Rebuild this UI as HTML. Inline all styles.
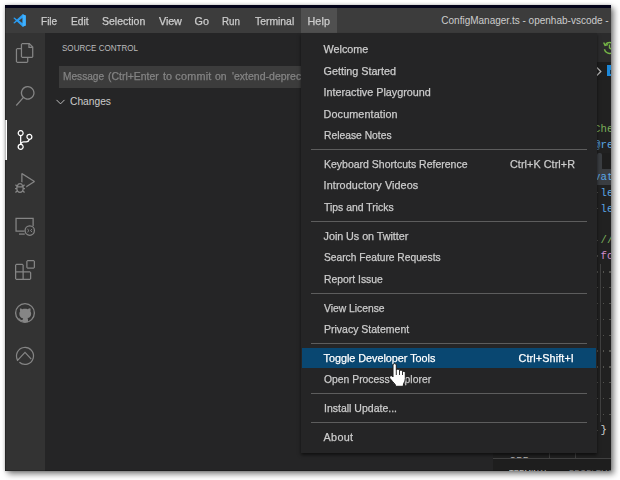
<!DOCTYPE html>
<html><head><meta charset="utf-8">
<style>
html,body{margin:0;padding:0;background:#fff;}
body{width:620px;height:480px;overflow:hidden;position:relative;font-family:"Liberation Sans",sans-serif;}
#win{position:absolute;left:5px;top:5px;width:606px;height:466px;background:#1e1e1e;box-shadow:2.5px 3px 6px rgba(0,0,0,.5),0 0 3px rgba(0,0,0,.22);}
#clip{position:absolute;left:0;top:0;width:606px;height:466px;overflow:hidden;}
.abs{position:absolute;}
.t{position:absolute;white-space:pre;line-height:14px;height:14px;}
#topstrip{left:0;top:0;width:606px;height:3px;background:#04041a;}
#titlebar{left:0;top:3px;width:606px;height:25px;background:#3c3c3c;}
#activity{left:0;top:28px;width:40px;height:438px;background:#333333;}
#sidebar{left:40px;top:28px;width:448px;height:438px;background:#252526;}
#editor{left:488px;top:28px;width:118px;height:438px;background:#1e1e1e;}
#menu{left:296px;top:28px;width:296px;height:420px;background:#252526;box-shadow:0 1.6px 3.3px rgba(0,0,0,.6);}
.sep{position:absolute;left:306px;width:276px;height:1px;background:#5d5d5d;}
svg{position:absolute;overflow:visible;}
.gray .t{-webkit-text-stroke:0.25px currentColor}
.gray{position:absolute;left:0;top:0;width:0;height:0;will-change:transform}
.dot{position:absolute;width:1.4px;height:1.4px;background:#52524e;}
</style></head><body>
<div id="win"><div id="clip">
  <div class="abs" id="topstrip"></div>
  <div class="abs" id="titlebar"></div>
  <svg style="left:8px;top:9px" width="13" height="13" viewBox="0 0 100 100"><path d="M74 2 L30 42 L11 27 L2 31 L22 50 L2 69 L11 73 L30 58 L74 98 L98 88 L98 12 Z M74 29 L74 71 L46 50 Z" fill="#2a9df4" fill-rule="evenodd"/><path d="M74 2 L98 12 L98 88 L74 98 Z" fill="#3fb1ff"/></svg>
  <div class="abs" style="left:296px;top:3px;width:36px;height:25px;background:#505050"></div>
<div class="gray">
<span class="t" style="left:36.00px;top:8.86px;font-size:10.8px;color:#cccccc;transform:scaleX(0.9307);transform-origin:0 0">File</span>
<span class="t" style="left:65.80px;top:8.86px;font-size:10.8px;color:#cccccc;transform:scaleX(0.9458);transform-origin:0 0">Edit</span>
<span class="t" style="left:97.00px;top:8.86px;font-size:10.8px;color:#cccccc;transform:scaleX(0.9747);transform-origin:0 0">Selection</span>
<span class="t" style="left:154.00px;top:8.86px;font-size:10.8px;color:#cccccc;letter-spacing:-0.130px">View</span>
<span class="t" style="left:189.60px;top:8.86px;font-size:10.8px;color:#cccccc;letter-spacing:-0.103px">Go</span>
<span class="t" style="left:217.30px;top:8.86px;font-size:10.8px;color:#cccccc;transform:scaleX(0.9085);transform-origin:0 0">Run</span>
<span class="t" style="left:249.50px;top:8.86px;font-size:10.8px;color:#cccccc;transform:scaleX(0.9605);transform-origin:0 0">Terminal</span>
<span class="t" style="left:302.50px;top:8.86px;font-size:10.8px;color:#cccccc;letter-spacing:0.070px">Help</span>
</div>
<span class="t" style="left:436.30px;top:8.73px;font-size:10px;color:#cccccc;letter-spacing:0.002px">ConfigManager.ts - openhab-vscode -</span>
  <div class="abs" id="activity"></div>
  <div class="abs" style="left:0;top:114.7px;width:1.6px;height:40px;background:#fff"></div>
  <svg class="ic" style="left:10px;top:38px" width="20" height="20" viewBox="0 0 24 24" fill="#858585"><path d="M17.5 0h-9L7 1.5V6H2.5L1 7.500v15.070L2.500 24h12.070L16 22.570V18h4.700l1.300-1.430V4.500L17.500 0zm0 2.120l2.380 2.380H17.500V2.120zm-3 20.380h-12v-15H7v9.070L8.500 18h6v4.500zm6-6h-12v-15H16V6h4.500v10.500z"/></svg>
  <svg class="ic" style="left:10px;top:81.3px" width="20" height="20" viewBox="0 0 24 24" fill="#858585"><path d="M15.250 0a8.250 8.250 0 0 0-6.180 13.720L1 22.880l1.120 1 8.050-9.120A8.251 8.251 0 1 0 15.250.010V0zm0 15a6.750 6.750 0 1 1 0-13.500 6.750 6.750 0 0 1 0 13.500z"/></svg>
  <svg class="ic" style="left:10px;top:124.7px" width="20" height="20" viewBox="0 0 24 24" fill="#ffffff"><path d="M21.007 8.222A3.738 3.738 0 0 0 15.045 5.200a3.737 3.737 0 0 0 1.156 6.583 2.988 2.988 0 0 1-2.668 1.670h-2.990a4.456 4.456 0 0 0-2.989 1.165V7.400a3.737 3.737 0 1 0-1.494 0v9.117a3.776 3.776 0 1 0 1.816.099 2.990 2.990 0 0 1 2.668-1.667h2.990a4.484 4.484 0 0 0 4.223-3.039 3.736 3.736 0 0 0 3.250-3.687zM4.565 3.738a2.242 2.242 0 1 1 4.484 0 2.242 2.242 0 0 1-4.484 0zm4.484 16.441a2.242 2.242 0 1 1-4.484 0 2.242 2.242 0 0 1 4.484 0zm8.221-9.715a2.242 2.242 0 1 1 0-4.485 2.242 2.242 0 0 1 0 4.485z"/></svg>
  <svg class="ic" style="left:10px;top:168px" width="20" height="20" viewBox="0 0 24 24" fill="#858585"><path d="M10.940 13.500l-1.320 1.320a3.730 3.730 0 0 0-7.240 0L1.060 13.500 0 14.560l1.720 1.720-.220.220V18H0v1.500h1.500v.080c.077.489.214.966.410 1.420L0 22.940 1.060 24l1.650-1.650A4.308 4.308 0 0 0 6 24a4.310 4.310 0 0 0 3.290-1.650L10.940 24 12 22.940 10.090 21c.198-.464.336-.951.410-1.450v-.100H12V18h-1.500v-1.500l-.220-.220L12 14.560l-1.060-1.060zM6 13.500a2.250 2.250 0 0 1 2.250 2.250h-4.500A2.250 2.250 0 0 1 6 13.500zm3 6a3.330 3.330 0 0 1-3 3 3.330 3.330 0 0 1-3-3v-2.250h6v2.250zm14.760-9.900v1.260L13.500 17.370V15.600l8.500-5.370L9 2v9.460a5.070 5.070 0 0 0-1.500-.720V.630L8.640 0l15.120 9.600z"/></svg>
  <svg class="ic" style="left:10px;top:211.3px" width="20" height="20" viewBox="0 0 24 24" fill="none" stroke="#858585" stroke-width="1.5"><path d="M11.500 18.250H1.250V2.750h20.500v9.200"/><path d="M4.800 21.700h6.900"/><circle cx="17.700" cy="17.500" r="5.600"/><path d="M14.900 15.700l1.900 1.800-1.900 1.800M20.500 15.700l-1.900 1.800 1.900 1.800" stroke-width="1.200"/></svg>
  <svg class="ic" style="left:10px;top:254.7px" width="20" height="20" viewBox="0 0 24 24" fill="#858585"><path d="M13.500 1.500L15 0h7.500L24 1.500V9l-1.500 1.500H15L13.500 9V1.500zm1.500 0V9h7.500V1.500H15zM0 15V6l1.500-1.500H9L10.500 6v7.500H18l1.500 1.500v7.500L18 24H1.500L0 22.500V15zm9-1.500V6H1.500v7.500H9zM9 15H1.500v7.500H9V15zm1.500 7.500H18V15h-7.500v7.500z"/></svg>
  <svg class="ic" style="left:10px;top:298px" width="20" height="20" viewBox="0 0 24 24" fill="none" stroke="#858585" stroke-width="1.600"><circle cx="12" cy="12" r="11.250"/><path fill="#858585" stroke="none" d="M5.600 6.200c1.200 0 2.300.5 3.200 1.200 1-.3 2.100-.4 3.200-.4s2.200.1 3.200.4c.9-.7 2-1.200 3.200-1.200.5 1.300.5 2.600.1 3.600.6.900.9 1.900.9 3 0 3.300-1.900 4.800-4.300 5.300.3.500.5 1.200.5 2.100v3h-6.600v-1.500c-2.600.6-3.600-.9-4.200-2.300-.3-.6-.8-1.100-1.300-1.400 1.100-.3 1.900.4 2.500 1.300.7 1.100 1.700 1.400 3.100 1 .1-.8.300-1.500.7-2-2.500-.4-4.600-1.800-4.600-5.500 0-1.100.3-2.100.9-3-.4-1-.4-2.300.1-3.600z"/></svg>
  <svg class="ic" style="left:9.800px;top:340.800px" width="20" height="20" viewBox="0 0 24 24" fill="none" stroke="#858585" stroke-width="1.500"><path d="M3.350 17.300A10.200 10.200 0 1 1 5.310 19.600"/><path d="M2.500 17.800L12 7.700l7.500 8"/></svg>
  <div class="abs" id="sidebar"></div>
  <div class="abs" style="left:54px;top:61px;width:420px;height:22px;background:#3c3c3c"></div>
  <svg style="left:51.3px;top:93.5px" width="9" height="6" viewBox="0 0 9 6" fill="none" stroke="#bdbdbd" stroke-width="1"><path d="M0.5 0.900L4.5 4.900L8.500 0.900"/></svg>
<span class="t" style="left:56.80px;top:35.81px;font-size:9.2px;color:#bbbbbb;transform:scaleX(0.8769);transform-origin:0 0">SOURCE CONTROL</span>
<span class="t" style="left:65.00px;top:89.46px;font-size:10.8px;color:#cccccc;transform:scaleX(0.9483);transform-origin:0 0">Changes</span>
<div class="gray">
<span class="t" style="left:57.70px;top:64.36px;font-size:10.8px;color:#848484;transform:scaleX(0.9381);transform-origin:0 0">Message</span>
<span class="t" style="left:102.70px;top:64.36px;font-size:10.8px;color:#848484;transform:scaleX(0.9676);transform-origin:0 0">(Ctrl+Enter</span>
<span class="t" style="left:157.90px;top:64.36px;font-size:10.8px;color:#848484;letter-spacing:0.042px">to</span>
<span class="t" style="left:170.30px;top:64.36px;font-size:10.8px;color:#848484;letter-spacing:0.251px">commit</span>
<span class="t" style="left:210.30px;top:64.36px;font-size:10.8px;color:#848484;transform:scaleX(0.9654);transform-origin:0 0">on</span>
<span class="t" style="left:226.80px;top:64.36px;font-size:10.8px;color:#848484;transform:scaleX(0.9734);transform-origin:0 0">'extend-deprecated-settings'</span>
</div>
  <div class="abs" id="editor"></div>
  <div class="abs" style="left:488px;top:28px;width:118px;height:29px;background:#2b2b2c"></div>
  <div class="abs" style="left:488px;top:75px;width:118px;height:378px;background:#212121"></div>
  <svg style="left:597.6px;top:36.2px" width="13" height="13" viewBox="0 0 12 12" fill="none" stroke="#74b446" stroke-width="1.3"><path d="M2.2 3.4A5 5 0 1 1 1.300 7.600"/><path d="M0.600 1.400L1.900 4L4.600 3.400" /><path d="M6 3.300V6.300L8 7.600"/></svg>
  <svg style="left:591.2px;top:61.9px" width="6" height="9" viewBox="0 0 6 9" fill="none" stroke="#b4b4b4" stroke-width="1.300"><path d="M0.800 0.500L4.800 4.500L0.800 8.500"/></svg>
  <div class="abs" style="left:602px;top:60px;width:6px;height:11px;background:#1b87d8"></div>
  <div class="abs" style="left:604.5px;top:64.500px;width:3px;height:4px;background:#14374f"></div>
  <div class="abs" style="left:592px;top:148px;width:4.500px;height:16px;background:#3a3d41;border-radius:2px 2px 0 0"></div>
  <div class="abs" style="left:592px;top:163.800px;width:16px;height:16px;background:#3a3d41;"></div>
  <div class="abs" style="left:596.5px;top:148px;width:12px;height:15.800px;background:#1e1e1e;border-radius:0 0 0 2.500px"></div>
  <div class="abs" style="left:595.3px;top:259px;width:1px;height:158px;background:#404040"></div>
<span class="t" style="left:589.10px;top:117.36px;font-size:10.67px;color:#7aae5a;font-family:'Liberation Mono',monospace">Che</span>
<span class="t" style="left:589.10px;top:133.19px;font-size:10.67px;color:#5aa5e4;font-family:'Liberation Mono',monospace">@re</span>
<span class="t" style="left:589.10px;top:164.86px;font-size:10.67px;color:#5aa5e4;font-family:'Liberation Mono',monospace">vat</span>
<span class="t" style="left:595.50px;top:180.69px;font-size:10.67px;color:#5aa5e4;font-family:'Liberation Mono',monospace">le</span>
<span class="t" style="left:595.50px;top:196.52px;font-size:10.67px;color:#5aa5e4;font-family:'Liberation Mono',monospace">le</span>
<span class="t" style="left:595.50px;top:228.19px;font-size:10.67px;color:#7aae5a;font-family:'Liberation Mono',monospace">//</span>
<span class="t" style="left:595.50px;top:244.02px;font-size:10.67px;color:#d08ccb;font-family:'Liberation Mono',monospace">fo</span>
<span class="t" style="left:595.50px;top:418.18px;font-size:10.67px;color:#d4d4d4;font-family:'Liberation Mono',monospace">}</span>
<div class="dot" style="left:591.4px;top:187.0px"></div>
<div class="dot" style="left:591.4px;top:202.9px"></div>
<div class="dot" style="left:591.4px;top:234.5px"></div>
<div class="dot" style="left:591.4px;top:250.4px"></div>
<div class="dot" style="left:591.4px;top:424.5px"></div>
<div class="dot" style="left:591.4px;top:266.2px"></div>
<div class="dot" style="left:597.8px;top:266.2px"></div>
<div class="dot" style="left:604.2px;top:266.2px"></div>
<div class="dot" style="left:591.4px;top:282.0px"></div>
<div class="dot" style="left:597.8px;top:282.0px"></div>
<div class="dot" style="left:604.2px;top:282.0px"></div>
<div class="dot" style="left:591.4px;top:297.9px"></div>
<div class="dot" style="left:597.8px;top:297.9px"></div>
<div class="dot" style="left:604.2px;top:297.9px"></div>
<div class="dot" style="left:591.4px;top:313.7px"></div>
<div class="dot" style="left:597.8px;top:313.7px"></div>
<div class="dot" style="left:604.2px;top:313.7px"></div>
<div class="dot" style="left:591.4px;top:329.5px"></div>
<div class="dot" style="left:597.8px;top:329.5px"></div>
<div class="dot" style="left:604.2px;top:329.5px"></div>
<div class="dot" style="left:591.4px;top:345.4px"></div>
<div class="dot" style="left:597.8px;top:345.4px"></div>
<div class="dot" style="left:604.2px;top:345.4px"></div>
<div class="dot" style="left:591.4px;top:361.2px"></div>
<div class="dot" style="left:597.8px;top:361.2px"></div>
<div class="dot" style="left:604.2px;top:361.2px"></div>
<div class="dot" style="left:591.4px;top:377.0px"></div>
<div class="dot" style="left:597.8px;top:377.0px"></div>
<div class="dot" style="left:604.2px;top:377.0px"></div>
<div class="dot" style="left:591.4px;top:392.9px"></div>
<div class="dot" style="left:597.8px;top:392.9px"></div>
<div class="dot" style="left:604.2px;top:392.9px"></div>
<div class="dot" style="left:591.4px;top:408.7px"></div>
<div class="dot" style="left:597.8px;top:408.7px"></div>
<div class="dot" style="left:604.2px;top:408.7px"></div>
  <div class="abs" style="left:488px;top:453px;width:118px;height:1px;background:#414141"></div>
  <div class="abs" style="left:544px;top:440px;width:1px;height:13px;background:#414141"></div>
  <div class="abs" style="left:570px;top:440px;width:1px;height:13px;background:#414141"></div>
  <div class="abs" style="left:500px;top:448px;width:30px;height:4.6px;overflow:hidden"><span class="t" style="left:4.6px;top:1.3px;font-size:10.67px;color:#b8b8b8;font-family:'Liberation Mono',monospace">255</span></div>
<span class="t" style="left:504.30px;top:460.51px;font-size:9.2px;color:#e7e7e7;transform:scaleX(0.8500);transform-origin:0 0">TERMINAL</span>
<span class="t" style="left:564.00px;top:460.51px;font-size:9.2px;color:#969696;transform:scaleX(0.8617);transform-origin:0 0">PROBLEMS</span>
  <div class="abs" id="menu"></div>
  <div class="abs" style="left:297px;top:343px;width:294px;height:20px;background:#094771"></div>
<div class="sep" style="top:144px"></div>
<div class="sep" style="top:216px"></div>
<div class="sep" style="top:288px"></div>
<div class="sep" style="top:338px"></div>
<div class="sep" style="top:388px"></div>
<div class="sep" style="top:417px"></div>
<div class="gray">
<span class="t" style="left:318.60px;top:37.06px;font-size:10.8px;color:#cccccc;letter-spacing:-0.030px">Welcome</span>
<span class="t" style="left:318.60px;top:58.96px;font-size:10.8px;color:#cccccc;letter-spacing:-0.022px">Getting Started</span>
<span class="t" style="left:318.60px;top:79.96px;font-size:10.8px;color:#cccccc;letter-spacing:-0.015px">Interactive Playground</span>
<span class="t" style="left:318.60px;top:102.06px;font-size:10.8px;color:#cccccc;letter-spacing:0.113px">Documentation</span>
<span class="t" style="left:318.60px;top:122.56px;font-size:10.8px;color:#cccccc;transform:scaleX(0.9544);transform-origin:0 0">Release Notes</span>
<span class="t" style="left:318.60px;top:152.16px;font-size:10.8px;color:#cccccc;transform:scaleX(0.9720);transform-origin:0 0">Keyboard Shortcuts Reference</span>
<span class="t" style="left:318.60px;top:173.26px;font-size:10.8px;color:#cccccc;letter-spacing:0.099px">Introductory Videos</span>
<span class="t" style="left:318.60px;top:194.96px;font-size:10.8px;color:#cccccc;transform:scaleX(0.9653);transform-origin:0 0">Tips and Tricks</span>
<span class="t" style="left:318.60px;top:223.76px;font-size:10.8px;color:#cccccc;letter-spacing:-0.057px">Join Us on Twitter</span>
<span class="t" style="left:318.60px;top:244.96px;font-size:10.8px;color:#cccccc;transform:scaleX(0.9477);transform-origin:0 0">Search Feature Requests</span>
<span class="t" style="left:318.60px;top:267.06px;font-size:10.8px;color:#cccccc;transform:scaleX(0.9605);transform-origin:0 0">Report Issue</span>
<span class="t" style="left:318.60px;top:296.06px;font-size:10.8px;color:#cccccc;transform:scaleX(0.9555);transform-origin:0 0">View License</span>
<span class="t" style="left:318.60px;top:317.06px;font-size:10.8px;color:#cccccc;transform:scaleX(0.9725);transform-origin:0 0">Privacy Statement</span>
<span class="t" style="left:318.60px;top:346.36px;font-size:10.8px;color:#fff;letter-spacing:-0.016px">Toggle Developer Tools</span>
<span class="t" style="left:318.60px;top:366.96px;font-size:10.8px;color:#cccccc;transform:scaleX(0.9595);transform-origin:0 0">Open Process Explorer</span>
<span class="t" style="left:318.60px;top:396.06px;font-size:10.8px;color:#cccccc;transform:scaleX(0.9729);transform-origin:0 0">Install Update...</span>
<span class="t" style="left:318.60px;top:424.76px;font-size:10.8px;color:#cccccc;letter-spacing:0.296px">About</span>
<span class="t" style="left:505.00px;top:152.16px;font-size:10.8px;color:#cccccc;letter-spacing:0.061px">Ctrl+K Ctrl+R</span>
<span class="t" style="left:513.50px;top:346.36px;font-size:10.8px;color:#fff;letter-spacing:0.124px">Ctrl+Shift+I</span>
</div>
  <svg style="left:383.500px;top:357.500px" width="17" height="24" viewBox="0 0 17 24"><path d="M4 2Q4 0.600 5.650 0.600Q7.300 0.600 7.300 2L7.300 7Q7.500 6.100 9 6.100Q10.400 6.100 10.500 7.300L10.500 8Q10.800 7 12 7Q13.400 7 13.500 8.400L13.500 9Q13.800 8.200 14.900 8.200Q16.300 8.200 16.300 9.800L16.300 15.500Q16.300 18.500 14.600 20.500L14.200 23.300L6.500 23.300L6.200 21.500Q3.500 18.500 1 15.500Q-0.100 13.900 1 13Q2.300 12.200 3.300 13.200L4 14Z" fill="#fff" stroke="#1c1c1c" stroke-width="1" stroke-linejoin="round"/><path d="M7.300 7V12M10.500 8V12M13.500 9V12" stroke="#1c1c1c" stroke-width="0.900" fill="none"/></svg>
  <div class="abs" style="left:0;top:465px;width:606px;height:1px;background:rgba(0,0,0,.2)"></div>
  <div class="abs" style="left:0;top:0;width:1px;height:466px;background:rgba(0,0,0,.25)"></div>
</div></div>
</body></html>
